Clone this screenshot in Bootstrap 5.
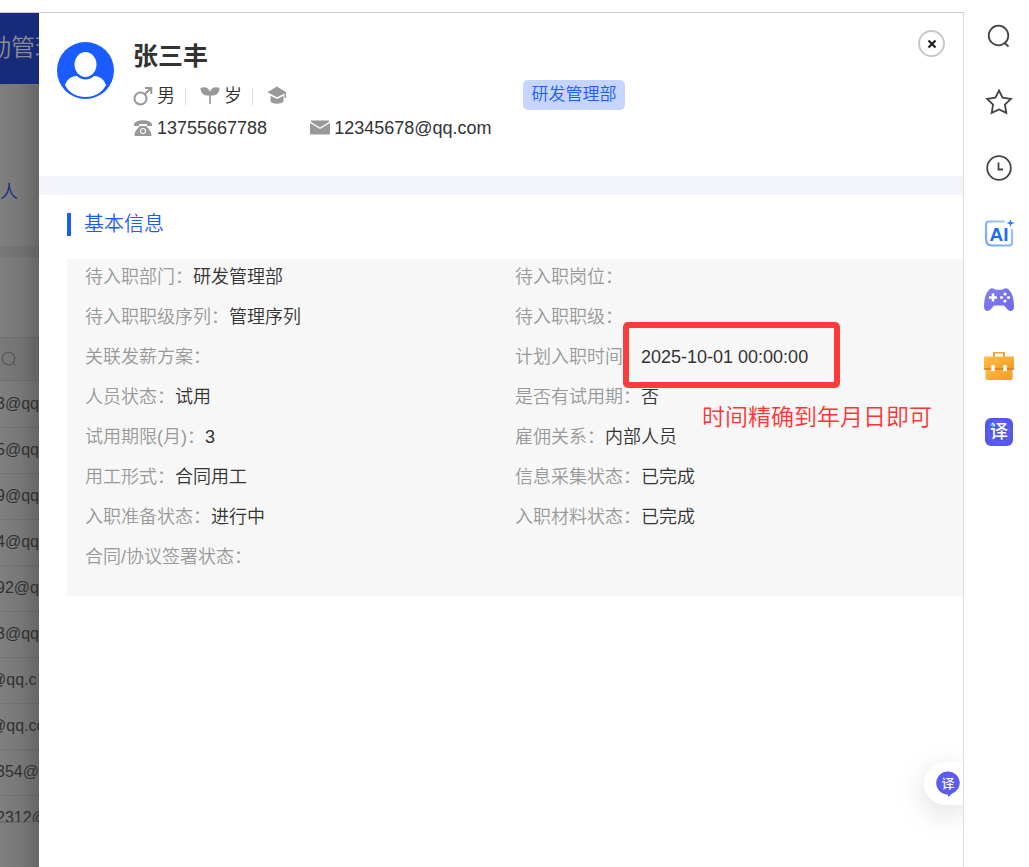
<!DOCTYPE html>
<html lang="zh-CN">
<head>
<meta charset="utf-8">
<meta name="viewport" content="width=device-width, initial-scale=1">
<title>基本信息</title>
<link href="https://cdn.jsdelivr.net/npm/bootstrap@5.3.0/dist/css/bootstrap.min.css" rel="stylesheet">
<style>
  body { font-family: "Liberation Sans", "Noto Sans CJK SC", sans-serif; font-size: 18px; line-height: 24px; color: #333; background: #fff; font-weight: 350; }
  .app-frame { margin-top: 12px; border-top: 1px solid #ccc; border-right: 1px solid #ddd; min-width: 0; }

  /* dimmed page behind the drawer */
  .dimmed { flex: 0 0 39px; width: 39px; background: linear-gradient(90deg, #7f7f7f, #787878 50%, #666); white-space: nowrap; }
  .dim-nav { height: 72px; padding-top: 17px; margin-bottom: 11px; background: #172b7c; color: #8b8b8b; font-size: 24px; line-height: 36px; border-bottom: 1px solid #777; }
  .dim-nav span { margin-left: -13px; }
  .dim-count { height: 150px; padding-top: 84px; color: #152c83; }
  .dim-gap { height: 11px; background: rgba(0, 0, 0, .05); }
  .dim-tools { height: 80px; }
  .dim-head { height: 44px; background: rgba(0, 0, 0, .04); border-top: 1px solid rgba(0, 0, 0, .07); border-bottom: 1px solid rgba(0, 0, 0, .07); }
  .dim-rows { height: 442px; border-bottom: 1px solid #6b6b6b; font-size: 16px; color: #303030; }
  .dim-rows table { margin-left: -4px; }
  .dim-rows td { height: 46px; padding: 0; border-bottom: 1px solid rgba(0, 0, 0, .08); }
  .dim-rows .from-at span { margin-left: -6px; }

  /* drawer */
  .drawer { min-width: 0; background: #fff; }
  .profile { min-height: 163px; padding: 24px 18px 0; }
  .avatar { margin-top: 5px; margin-right: 19px; }
  .person-name { font-size: 25px; line-height: 38px; font-weight: 700; margin-bottom: 9px; }
  .facts { line-height: 24px; margin-bottom: 8px; }
  .facts .rule { width: 1px; height: 17px; margin: 0 10px; background: #ddd; }
  .mail-icon { margin-left: 43px; }
  .dept-tag { margin: 43px 0 0 31px; padding: 0 8px 0 9px; height: 30px; line-height: 30px; font-size: 17px; color: #1a5cff; background: #c6d5ff; border-radius: 5px; }
  .btn-round { width: 27px; height: 27px; margin-top: -7px; border: 2px solid #c8c8c8; border-radius: 50%; background: #fff; }
  .divider-band { height: 19px; background: #f4f5fb; }
  .section-title { margin: 18px 0 23px 28px; padding-left: 13px; border-left: 4px solid #1a5cff; font-size: 20px; line-height: 23px; color: #1a5cff; font-weight: 350; }
  .info-box { margin-left: 28px; padding: 0 18px 17px; background: #f7f7f7; }
  .info-item { line-height: 37px; height: 40px; }
  .info-item dt { color: #999; font-weight: 350; }
  .info-item dd { margin: 0; }
  .marker { left: -18px; top: -17px; width: 217px; height: 66px; border: 6px solid #ff3a3a; border-radius: 5px; }
  .marker-note { left: 61px; top: 62px; font-size: 23px; line-height: 32px; color: #ff3535; }
  .float-translate { right: 0; bottom: 62px; width: 39px; height: 43px; padding: 0 0 0 12px; border: 0; background: #fff; border-radius: 22px 0 0 22px; box-shadow: 0 8px 30px rgba(0, 0, 0, .14); }
  .float-clip { width: 90px; bottom: 0; right: 0; height: 180px; pointer-events: none; }
  .float-clip button { pointer-events: auto; }

  /* browser side bar */
  .side-tools { flex: 0 0 65px; padding: 22px 0 0 20px; gap: 36px; }
  .side-tools button { width: 30px; height: 30px; padding: 0; border: 0; background: none; line-height: 0; }
  svg text { font-family: "Noto Sans CJK SC", sans-serif; }
</style>
</head>
<body>
<div class="d-flex min-vh-100">
  <main class="app-frame d-flex flex-grow-1 position-relative">
    <div class="dimmed overflow-hidden">
      <div class="dim-nav"><span>勤管理</span></div>
      <div class="dim-count">人</div>
      <div class="dim-gap"></div>
      <div class="dim-tools"></div>
      <div class="dim-head d-flex align-items-center">
        <svg width="18" height="18" viewBox="0 0 18 18" fill="none" stroke="#4b4b4b"><circle cx="8.500" cy="8.500" r="6.300"/><path d="M13 13l2.500 2.500"/></svg>
      </div>
      <div class="dim-rows overflow-hidden">
        <table>
          <tbody>
            <tr><td>3@qq</td></tr>
            <tr><td>5@qq</td></tr>
            <tr><td>9@qq</td></tr>
            <tr><td>4@qq</td></tr>
            <tr><td>92@q</td></tr>
            <tr><td>3@qq</td></tr>
            <tr class="from-at"><td><span>@qq.c</span></td></tr>
            <tr class="from-at"><td><span>@qq.co</span></td></tr>
            <tr><td>354@</td></tr>
            <tr><td>2312@</td></tr>
          </tbody>
        </table>
      </div>
    </div>

    <section class="drawer flex-grow-1">
      <header class="profile d-flex align-items-start">
        <svg class="avatar flex-shrink-0" width="57" height="57" viewBox="0 0 57 57"><circle cx="28.500" cy="28.500" r="28.500" fill="#1a5cff"/><ellipse cx="28.500" cy="22.500" rx="11" ry="12.500" fill="#fff"/><path d="M8 43c2-6 7-9 12-9 4 4.500 13 4.500 17 0 5 0 10 3 12 9C45 51 37.500 55 28.500 55S12 51 8 43z" fill="#fff"/></svg>
        <div>
          <h1 class="person-name">张三丰</h1>
          <div class="facts d-flex align-items-center">
            <svg width="20" height="20" viewBox="0 0 20 20" fill="none" stroke="#999" stroke-width="2"><circle cx="7.500" cy="12.500" r="6"/><path d="M12 8l6-6M12 2h6.300v6"/></svg>
            <span class="ms-1">男</span>
            <span class="rule"></span>
            <svg class="ms-1" width="20" height="20" viewBox="0 0 20 20" fill="#999"><path d="M9.200 9.500C4 10 .5 7 .5 2 5 0 9.200 2 10 6c.8-4 5-6 9.500-4 0 5-3.500 8-8.700 7.500V18H9.200z"/></svg>
            <span class="ms-1">岁</span>
            <span class="rule"></span>
            <svg class="ms-1" width="20" height="20" viewBox="0 0 20 20" fill="#999"><path d="M10 .5L.5 6.200l9.500 5 7.500-3.800V12h1.500V6.200zM3.500 9.800v5.700c3 3 10 3 13 0V9.800L10 13z"/></svg>
          </div>
          <div class="facts d-flex align-items-center">
            <svg width="20" height="20" viewBox="0 0 20 20" fill="#999"><path d="M1 7C1 .8 19 .8 19 7v1h-5V6H6v2H1z"/><path fill-rule="evenodd" d="M6.500 8h7c1 2.500 5 4 5 10h-17c0-6 4-7.500 5-10zM10 10a3 3 0 100 6 3 3 0 000-6z"/><circle cx="10" cy="13" r="2"/></svg>
            <span class="ms-1">13755667788</span>
            <svg class="mail-icon" width="20" height="20" viewBox="0 0 20 20" fill="#999"><path d="M1 2.500h18v1.500l-9 5.500L1 4z"/><path d="M0 5l10 6 10-6v10.500q0 1-1 1H1q-1 0-1-1z"/></svg>
            <span class="ms-1">12345678@qq.com</span>
          </div>
        </div>
        <span class="dept-tag text-nowrap">研发管理部</span>
        <button type="button" class="btn-round ms-auto p-0 d-flex align-items-center justify-content-center" aria-label="关闭">
          <svg width="10" height="10" viewBox="0 0 10 10" stroke="#222" stroke-width="2.200"><path d="M1.500 1.500l7 7M8.500 1.500l-7 7"/></svg>
        </button>
      </header>
      <div class="divider-band"></div>
      <h2 class="section-title">基本信息</h2>
      <dl class="info-box row g-0 mb-0">
        <div class="info-item col-6 d-flex"><dt>待入职部门：</dt><dd>研发管理部</dd></div>
        <div class="info-item col-6 d-flex"><dt>待入职岗位：</dt><dd></dd></div>
        <div class="info-item col-6 d-flex"><dt>待入职职级序列：</dt><dd>管理序列</dd></div>
        <div class="info-item col-6 d-flex"><dt>待入职职级：</dt><dd></dd></div>
        <div class="info-item col-6 d-flex"><dt>关联发薪方案：</dt><dd></dd></div>
        <div class="info-item col-6 d-flex"><dt>计划入职时间：</dt><dd class="position-relative text-nowrap">2025-10-01 00:00:00<span class="marker position-absolute"></span><span class="marker-note position-absolute">时间精确到年月日即可</span></dd></div>
        <div class="info-item col-6 d-flex"><dt>人员状态：</dt><dd>试用</dd></div>
        <div class="info-item col-6 d-flex"><dt>是否有试用期：</dt><dd>否</dd></div>
        <div class="info-item col-6 d-flex"><dt>试用期限(月)：</dt><dd>3</dd></div>
        <div class="info-item col-6 d-flex"><dt>雇佣关系：</dt><dd>内部人员</dd></div>
        <div class="info-item col-6 d-flex"><dt>用工形式：</dt><dd>合同用工</dd></div>
        <div class="info-item col-6 d-flex"><dt>信息采集状态：</dt><dd>已完成</dd></div>
        <div class="info-item col-6 d-flex"><dt>入职准备状态：</dt><dd>进行中</dd></div>
        <div class="info-item col-6 d-flex"><dt>入职材料状态：</dt><dd>已完成</dd></div>
        <div class="info-item col-6 d-flex"><dt>合同/协议签署状态：</dt><dd></dd></div>
      </dl>
    </section>

    <div class="float-clip position-absolute overflow-hidden">
      <button type="button" class="float-translate position-absolute d-flex align-items-center" aria-label="翻译">
        <svg width="24" height="26" viewBox="0 0 24 26"><path d="M12 0.500a11.300 11.300 0 014 22L12.500 26l-1-2.500A11.500 11.500 0 0112 .5z" fill="#5b5cf0"/><text x="12" y="17" font-size="13" font-weight="500" text-anchor="middle" fill="#fff">译</text></svg>
      </button>
    </div>
  </main>

  <aside class="side-tools d-flex flex-column" aria-label="工具栏">
    <button type="button" aria-label="搜索"><svg width="30" height="30" viewBox="0 0 30 30" fill="none" stroke="#444" stroke-width="1.800"><circle cx="14.500" cy="13.500" r="9.800"/><path d="M20 20.500l4.500 4"/></svg></button>
    <button type="button" aria-label="收藏"><svg width="30" height="30" viewBox="0 0 30 30" fill="none" stroke="#444" stroke-width="1.800"><path d="M15 2.500l3.600 7.200 8.300 1.200-6 5.600 1.400 8.400L15 21.500l-7.300 3.400 1.400-8.400-6-5.600 8.300-1.200z"/></svg></button>
    <button type="button" aria-label="历史"><svg width="30" height="30" viewBox="0 0 30 30" fill="none" stroke="#444" stroke-width="1.800"><circle cx="15" cy="14" r="11.800"/><path d="M14.500 8.500v7h4.500"/></svg></button>
    <button type="button" aria-label="AI"><svg width="30" height="30" viewBox="0 0 30 30"><defs><linearGradient id="aiFrame" x1="0" y1="1" x2="1" y2="0"><stop offset="0" stop-color="#6da2ff"/><stop offset="1" stop-color="#a9cbff"/></linearGradient></defs><path d="M21 1.500H5Q2 1.500 2 4.500v14q0 7 6 7h17q3 0 3-3V9" fill="none" stroke="url(#aiFrame)" stroke-width="2.200"/><path d="M26.500-1l1 3 3 1-3 1-1 3-1-3-3-1 3-1z" fill="#2878ff"/><text x="15" y="21" font-size="19" font-weight="700" text-anchor="middle" fill="#1e6cf5" style="font-family:'Liberation Sans'">AI</text></svg></button>
    <button type="button" aria-label="游戏"><svg width="30" height="30" viewBox="0 0 30 30"><defs><linearGradient id="pad" x1="0" y1="0" x2="1" y2="1"><stop offset="0" stop-color="#8580ee"/><stop offset="1" stop-color="#6a69ea"/></linearGradient></defs><path d="M7 2.500c2-1 4 1 5 1.300h6c1-.3 3-2.300 5-1.300 5 2 7 11 7 18 0 4-3 6-6 3.500l-4-4.500H10L6 24c-3 2.500-6 .5-6-3.500C0 13.500 2 4.500 7 2.500z" fill="url(#pad)"/><path d="M9 7.500v8M5 11.500h8" stroke="#fff" stroke-width="2.500"/><g fill="#fff"><circle cx="21" cy="8" r="1.600"/><circle cx="21" cy="15" r="1.600"/><circle cx="17.500" cy="11.500" r="1.600"/><circle cx="24.500" cy="11.500" r="1.600"/></g></svg></button>
    <button type="button" aria-label="工具箱"><svg width="30" height="30" viewBox="0 0 30 30"><defs><linearGradient id="case" x1="0" y1="0" x2="1" y2="1"><stop offset="0" stop-color="#ffc04a"/><stop offset="1" stop-color="#f39a22"/></linearGradient></defs><path d="M10 5V.5h10V5" fill="none" stroke="#f2a13a" stroke-width="2"/><rect x="1.500" y="14" width="27" height="14" rx="1.500" fill="url(#case)"/><path d="M1 4.500h28q1 0 1 1V17H0V5.500q0-1 1-1z" fill="url(#case)"/><path d="M0 17h30" stroke="#d97c1e" stroke-width="1.500"/><path d="M9 13v6M21 13v6" stroke="#fff" stroke-width="3.500"/></svg></button>
    <button type="button" aria-label="翻译网页"><svg width="30" height="30" viewBox="0 0 30 30"><rect x="1" y="0" width="28" height="28" rx="6" fill="#5557ea"/><circle cx="15" cy="14" r="11" fill="none" stroke="#6668f0"/><text x="15" y="20" font-size="18" font-weight="500" text-anchor="middle" fill="#fff">译</text><path d="M6.500 6l3 2.500" stroke="#28d4ff" stroke-width="2"/></svg></button>
  </aside>
</div>
<script src="https://cdn.jsdelivr.net/npm/bootstrap@5.3.0/dist/js/bootstrap.bundle.min.js"></script>
</body>
</html>
